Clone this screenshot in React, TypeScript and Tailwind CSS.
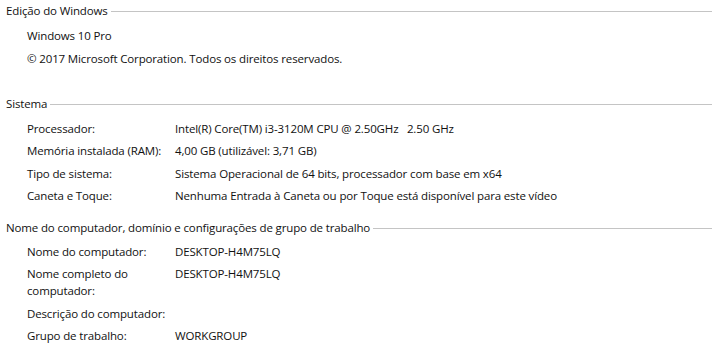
import React from "react";

type Row = { label: React.ReactNode; value?: string };

const sistema: Row[] = [
  { label: "Processador:", value: "Intel(R) Core(TM) i3-3120M CPU @ 2.50GHz   2.50 GHz" },
  { label: "Memória instalada (RAM):", value: "4,00 GB (utilizável: 3,71 GB)" },
  { label: "Tipo de sistema:", value: "Sistema Operacional de 64 bits, processador com base em x64" },
  { label: "Caneta e Toque:", value: "Nenhuma Entrada à Caneta ou por Toque está disponível para este vídeo" },
];

const computador: Row[] = [
  { label: "Nome do computador:", value: "DESKTOP-H4M75LQ" },
  {
    label: (
      <>
        Nome completo do
        <br />
        computador:
      </>
    ),
    value: "DESKTOP-H4M75LQ",
  },
  { label: "Descrição do computador:" },
  { label: "Grupo de trabalho:", value: "WORKGROUP" },
];

const SectionHeader = ({ title }: { title: string }) => (
  <div className="flex items-center pl-[6px] h-[17px]">
    <span className="whitespace-nowrap">{title}</span>
    <div className="flex-1 ml-[3px] h-px bg-[#c4c4c4] mt-[2px]" />
  </div>
);

const InfoRows = ({ rows }: { rows: Row[] }) => (
  <div className="flex flex-col gap-[5.5px] pl-[27px]">
    {rows.map((row, i) => (
      <div key={i} className="grid grid-cols-[148px_1fr]">
        <div>{row.label}</div>
        <div className="whitespace-pre">{row.value}</div>
      </div>
    ))}
  </div>
);

export default function App() {
  return (
    <div
      className="w-[712px] h-[348px] overflow-hidden bg-white text-[#111111] text-[11.5px] tracking-[-0.14px] leading-[17px] pt-[2px]"
      style={{ fontFamily: '"Open Sans", "Noto Sans", sans-serif' }}
    >
      <SectionHeader title="Edição do Windows" />
      <div className="flex flex-col gap-[6px] pl-[27px] mt-[8px]">
        <div>Windows 10 Pro</div>
        <div>© 2017 Microsoft Corporation. Todos os direitos reservados.</div>
      </div>

      <div className="mt-[28px]">
        <SectionHeader title="Sistema" />
      </div>
      <div className="mt-[7.5px]">
        <InfoRows rows={sistema} />
      </div>

      <div className="mt-[14.5px]">
        <SectionHeader title="Nome do computador, domínio e configurações de grupo de trabalho" />
      </div>
      <div className="mt-[7px]">
        <InfoRows rows={computador} />
      </div>
    </div>
  );
}
